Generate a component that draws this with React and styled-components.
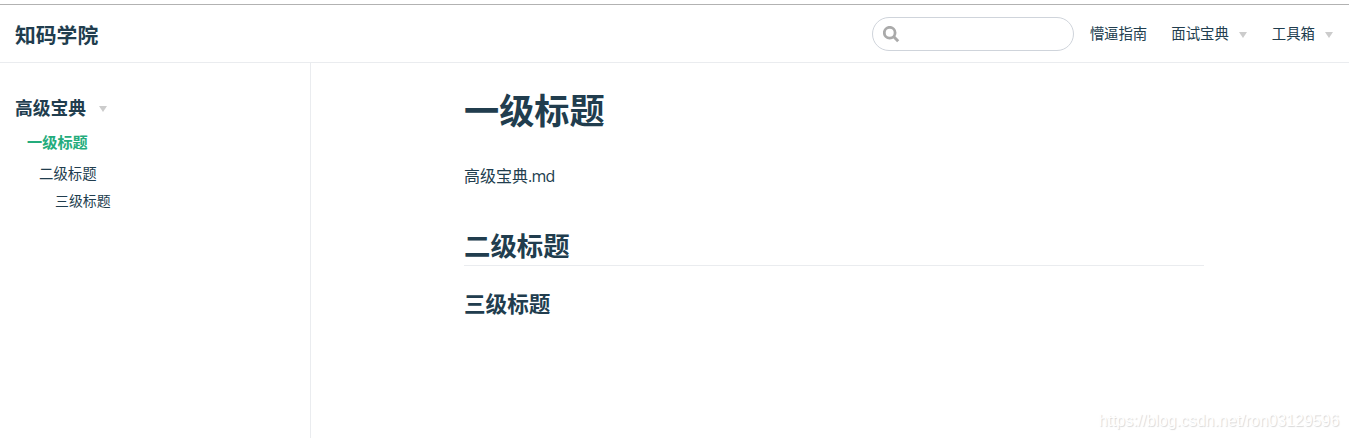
import React from "react";
import styled, { createGlobalStyle } from "styled-components";

const GlobalStyle = createGlobalStyle`
  * { box-sizing: border-box; }
  body {
    margin: 0;
    background: #fff;
    color: #213d4e;
    font-family: "Open Sans", "Noto Sans CJK SC", sans-serif;
    font-size: 16px;
    overflow: hidden;
  }
`;

const Page = styled.div`
  position: relative;
  display: flex;
  flex-direction: column;
  height: 439px;
  padding-top: 4px;
`;

const Navbar = styled.header`
  flex: none;
  display: flex;
  align-items: center;
  height: 59px;
  padding: 0 16px 0 15px;
  border-top: 1px solid #b2b2b2;
  border-bottom: 1px solid #eaecef;
`;

const SiteName = styled.a`
  margin-right: auto;
  padding-top: 2px;
  font-size: 20.8px;
  line-height: 30px;
  font-weight: 700;
`;

const SearchBox = styled.label`
  display: flex;
  align-items: center;
  width: 202px;
  height: 34px;
  margin-right: 16px;
  padding-left: 10px;
  border: 1px solid #cfd4db;
  border-radius: 17px;

  svg {
    margin-top: 1px;
  }
`;

const SearchInput = styled.input`
  flex: 1;
  min-width: 0;
  margin-right: 16px;
  border: 0;
  outline: 0;
  background: transparent;
`;

const NavLinks = styled.nav`
  display: flex;
  gap: 24px;
`;

const NavItem = styled.a`
  display: flex;
  align-items: center;
  font-size: 14.4px;
  line-height: 22px;
  white-space: nowrap;

  &:last-child {
    margin-left: 1px;
  }
`;

const Arrow = styled.span`
  margin-left: ${(p) => p.$gap}px;
  margin-top: 2px;
  border-left: 4px solid transparent;
  border-right: 4px solid transparent;
  border-top: 6px solid #ccc;
`;

const Body = styled.div`
  flex: 1;
  display: flex;
  min-height: 0;
`;

const Sidebar = styled.aside`
  flex: none;
  width: 311px;
  height: 375px;
  padding: 32px 0 0 15px;
  border-right: 1px solid #eaecef;
`;

const GroupTitle = styled.div`
  display: flex;
  align-items: center;
  height: 26px;
  font-size: 17.75px;
  line-height: 24px;
  font-weight: 700;
`;

const SideLink = styled.a`
  display: block;
  margin-top: ${(p) => p.$top}px;
  padding-left: ${(p) => p.$indent}px;
  font-size: ${(p) => p.$size}px;
  line-height: 22px;
  font-weight: ${(p) => (p.$active ? 700 : 400)};
  color: ${(p) => (p.$active ? "#24ac7c" : "inherit")};
`;

const Content = styled.main`
  width: 740px;
  margin-left: 153px;
`;

const H1 = styled.h1`
  margin: 25px 0 0;
  font-size: 35.2px;
  line-height: 44px;
`;

const Paragraph = styled.p`
  margin: 31px 0 0;
  font-size: 16px;
  line-height: 27px;
`;

const Extension = styled.span`
  letter-spacing: -0.8px;
`;

const H2 = styled.h2`
  margin: 38px 0 0;
  padding-bottom: 1px;
  font-size: 26.4px;
  line-height: 36px;
  border-bottom: 1px solid #eaecef;
`;

const H3 = styled.h3`
  margin: 23px 0 0;
  font-size: 21.6px;
  line-height: 30px;
`;

const Watermark = styled.div`
  position: absolute;
  right: 10px;
  top: 411px;
  font: 15.9px/20px "Liberation Sans", sans-serif;
  color: #fff;
  text-shadow: 1px 1px 1px #d8d8d8;
`;

function SearchIcon() {
  return (
    <svg width="17" height="17" viewBox="0 0 17 17" fill="none" stroke="#aaa">
      <circle cx="6.7" cy="6.7" r="5.4" strokeWidth="2.8" />
      <path d="M10.8 10.8 L15.2 15.2" strokeWidth="3" />
    </svg>
  );
}

export default function App() {
  return (
    <>
      <GlobalStyle />
      <Page>
        <Navbar>
          <SiteName>知码学院</SiteName>
          <SearchBox>
            <SearchIcon />
            <SearchInput aria-label="搜索" />
          </SearchBox>
          <NavLinks>
            <NavItem>懵逼指南</NavItem>
            <NavItem>面试宝典<Arrow $gap={10} /></NavItem>
            <NavItem>工具箱<Arrow $gap={10} /></NavItem>
          </NavLinks>
        </Navbar>
        <Body>
          <Sidebar>
            <GroupTitle>高级宝典<Arrow $gap={13} /></GroupTitle>
            <SideLink $active $top={10} $indent={12} $size={15.2}>一级标题</SideLink>
            <SideLink $top={10} $indent={24} $size={14.4}>二级标题</SideLink>
            <SideLink $top={5} $indent={40} $size={13.9}>三级标题</SideLink>
          </Sidebar>
          <Content>
            <H1>一级标题</H1>
            <Paragraph>高级宝典<Extension>.md</Extension></Paragraph>
            <H2>二级标题</H2>
            <H3>三级标题</H3>
          </Content>
        </Body>
        <Watermark>https://blog.csdn.net/ron03129596</Watermark>
      </Page>
    </>
  );
}
